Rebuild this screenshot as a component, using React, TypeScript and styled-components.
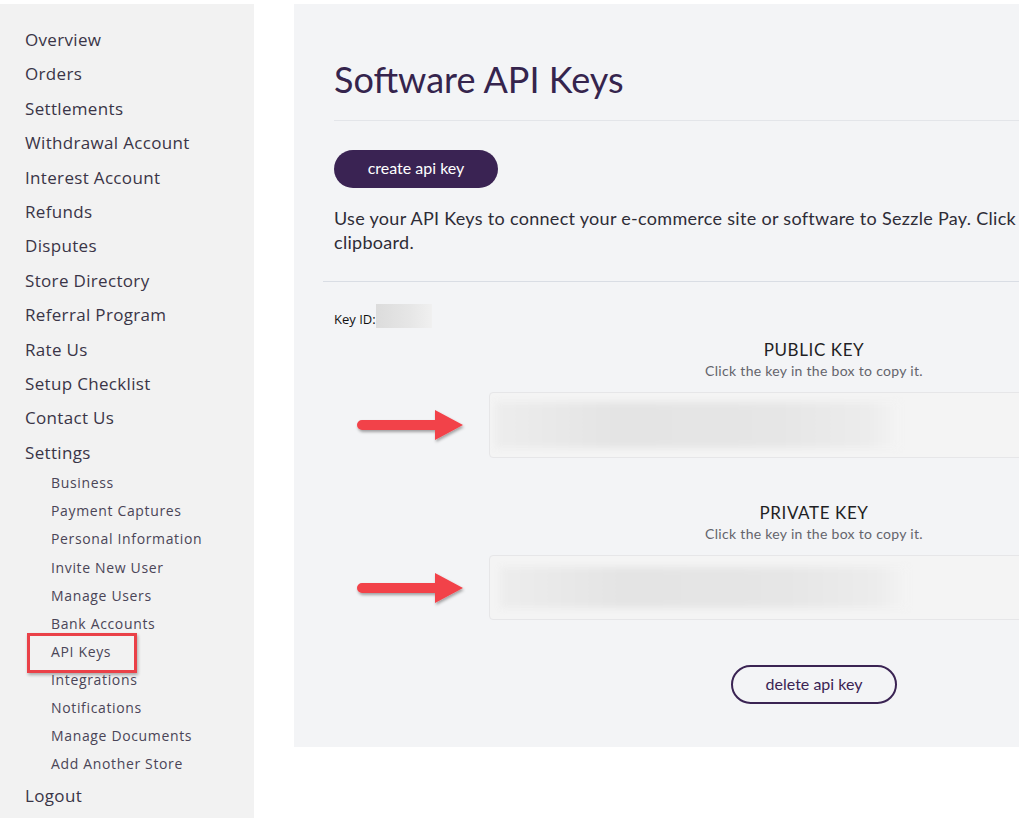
import React from "react";
import styled, { createGlobalStyle } from "styled-components";

const GlobalStyle = createGlobalStyle`
  html, body {
    margin: 0;
    padding: 0;
    background: #ffffff;
    overflow: hidden;
  }
  * { box-sizing: border-box; }
`;

const Page = styled.div`
  display: flex;
  align-items: flex-start;
  gap: 40px;
  padding-top: 4px;
  width: 1019px;
  height: 818px;
  overflow: hidden;
`;

const Sidebar = styled.nav`
  flex: 0 0 254px;
  align-self: stretch;
  background: #f2f2f2;
  padding: 19px 0 0 25px;
  font-family: "Open Sans", "Noto Sans", sans-serif;
`;

const NavList = styled.ul`
  list-style: none;
  margin: 0;
  padding: 0;
`;

const NavItem = styled.li`
  font-size: 17px;
  line-height: 34.4px;
  letter-spacing: 0.33px;
  color: #3a3547;
  white-space: nowrap;
`;

const SubList = styled.ul`
  list-style: none;
  margin: -1px 0 1px;
  padding: 0 0 0 26px;
`;

const SubItem = styled.li<{ $active?: boolean }>`
  position: relative;
  font-size: 14px;
  line-height: 28.1px;
  letter-spacing: 0.65px;
  color: #4a4557;
  white-space: nowrap;
  ${(p) =>
    p.$active &&
    `
    &::before {
      content: "";
      position: absolute;
      left: -24px;
      top: -5px;
      width: 104px;
      height: 34px;
      border: 3px solid #ea4148;
      box-shadow: 1px 2px 3px rgba(0,0,0,0.3);
    }
  `}
`;

const Main = styled.main`
  flex: 0 0 1040px;
  background: #f3f4f6;
  padding: 55px 40px 43px;
  font-family: Lato, "Open Sans", sans-serif;
  color: #2d2a35;
`;

const Title = styled.h1`
  margin: 0;
  font-size: 36px;
  line-height: 40px;
  font-weight: 400;
  color: #35244d;
`;

const Rule = styled.hr<{ $wide?: boolean }>`
  border: 0;
  height: 1px;
  background: ${(p) => (p.$wide ? "#d9dde4" : "#e3e5e9")};
  margin: ${(p) => (p.$wide ? "27px 0 0 -11px" : "21px 0 0")};
`;

const PrimaryButton = styled.button`
  display: block;
  margin-top: 29px;
  width: 164px;
  height: 38px;
  border: 0;
  border-radius: 19px;
  padding: 0 0 3px;
  background: #3a2353;
  color: #ffffff;
  font-family: Lato, sans-serif;
  font-size: 16px;
`;

const Intro = styled.p`
  margin: 18px 0 0;
  font-size: 18px;
  line-height: 24px;
  letter-spacing: 0.3px;
  color: #2e2c36;
  white-space: nowrap;
`;

const KeyIdRow = styled.div`
  display: flex;
  align-items: flex-end;
  height: 24px;
  margin-top: 22px;
  font-family: "Open Sans", sans-serif;
  font-size: 13px;
  font-weight: 400;
  color: #111111;
`;

const KeyIdLabel = styled.span`
  line-height: 18px;
`;

const Redacted = styled.span`
  display: inline-block;
  width: 56px;
  height: 24px;
  background: linear-gradient(90deg, #dcdcdc, #e6e6e6 60%, #f0f0f0);
`;

const KeySection = styled.section<{ $first?: boolean }>`
  display: flex;
  flex-direction: column;
  align-items: center;
  margin-top: ${(p) => (p.$first ? "10px" : "43px")};
`;

const KeyTitle = styled.h2`
  margin: 0;
  font-size: 17px;
  line-height: 24px;
  letter-spacing: 0.6px;
  font-weight: 400;
  color: #1f1f24;
  text-transform: uppercase;
`;

const KeyHint = styled.div`
  font-size: 14px;
  line-height: 18px;
  letter-spacing: 0.3px;
  color: #64646c;
`;

const BoxWrap = styled.div`
  position: relative;
  margin-top: 12px;
`;

const KeyBox = styled.div<{ $height: number; $inset: number }>`
  width: 650px;
  height: ${(p) => p.$height}px;
  background: #f4f4f4;
  border: 1px solid #e6e6e8;
  border-radius: 4px;
  padding: ${(p) => (p.$inset > 6 ? 11 : 9)}px 0 0 ${(p) => p.$inset}px;
  overflow: hidden;
`;

const BlurredKey = styled.div<{ $w: number; $h: number }>`
  width: ${(p) => p.$w}px;
  height: ${(p) => p.$h}px;
  background: linear-gradient(90deg, #ededed 0%, #e4e4e4 30%, #e6e6e6 70%, #ececec 92%, #f4f4f4 100%);
  filter: blur(3px);
`;

const ArrowMark = styled.svg`
  position: absolute;
  left: -132px;
  top: 50%;
  transform: translateY(-50%);
  overflow: visible;
`;

const OutlineButton = styled.button`
  margin-top: 45px;
  width: 166px;
  height: 39px;
  border: 2px solid #3a2353;
  border-radius: 20px;
  padding: 0 0 2px;
  background: transparent;
  color: #3a2353;
  font-family: Lato, sans-serif;
  font-size: 16px;
`;

const Arrow = () => (
  <ArrowMark width="110" height="34" viewBox="0 0 110 34">
    <defs>
      <filter id="sh" x="-20%" y="-40%" width="140%" height="180%">
        <feDropShadow dx="1" dy="2" stdDeviation="1.5" floodColor="#000" floodOpacity="0.35" />
      </filter>
    </defs>
    <g filter="url(#sh)">
      <path d="M5 12 L78 12 L78 2 L106 17 L78 32 L78 22 L5 22 A5 5 0 0 1 5 12 Z" fill="#f2424a" />
    </g>
  </ArrowMark>
);

const mainItems = [
  "Overview",
  "Orders",
  "Settlements",
  "Withdrawal Account",
  "Interest Account",
  "Refunds",
  "Disputes",
  "Store Directory",
  "Referral Program",
  "Rate Us",
  "Setup Checklist",
  "Contact Us",
];

const settingsItems = [
  "Business",
  "Payment Captures",
  "Personal Information",
  "Invite New User",
  "Manage Users",
  "Bank Accounts",
  "API Keys",
  "Integrations",
  "Notifications",
  "Manage Documents",
  "Add Another Store",
];

export default function App() {
  return (
    <>
      <GlobalStyle />
      <Page>
        <Sidebar>
          <NavList>
            {mainItems.map((m) => (
              <NavItem key={m}>{m}</NavItem>
            ))}
            <NavItem>
              Settings
              <SubList>
                {settingsItems.map((s) => (
                  <SubItem key={s} $active={s === "API Keys"}>
                    {s}
                  </SubItem>
                ))}
              </SubList>
            </NavItem>
            <NavItem>Logout</NavItem>
          </NavList>
        </Sidebar>
        <Main>
          <Title>Software API Keys</Title>
          <Rule />
          <PrimaryButton>create api key</PrimaryButton>
          <Intro>
            Use your API Keys to connect your e-commerce site or software to Sezzle Pay. Click
            <br />
            clipboard.
          </Intro>
          <Rule $wide />
          <KeyIdRow>
            <KeyIdLabel>Key ID:</KeyIdLabel>
            <Redacted />
          </KeyIdRow>
          <KeySection $first>
            <KeyTitle>Public Key</KeyTitle>
            <KeyHint>Click the key in the box to copy it.</KeyHint>
            <BoxWrap>
              <Arrow />
              <KeyBox $height={66} $inset={5}>
                <BlurredKey $w={405} $h={46} />
              </KeyBox>
            </BoxWrap>
          </KeySection>
          <KeySection>
            <KeyTitle>Private Key</KeyTitle>
            <KeyHint>Click the key in the box to copy it.</KeyHint>
            <BoxWrap>
              <Arrow />
              <KeyBox $height={65} $inset={10}>
                <BlurredKey $w={408} $h={41} />
              </KeyBox>
            </BoxWrap>
            <OutlineButton>delete api key</OutlineButton>
          </KeySection>
        </Main>
      </Page>
    </>
  );
}
